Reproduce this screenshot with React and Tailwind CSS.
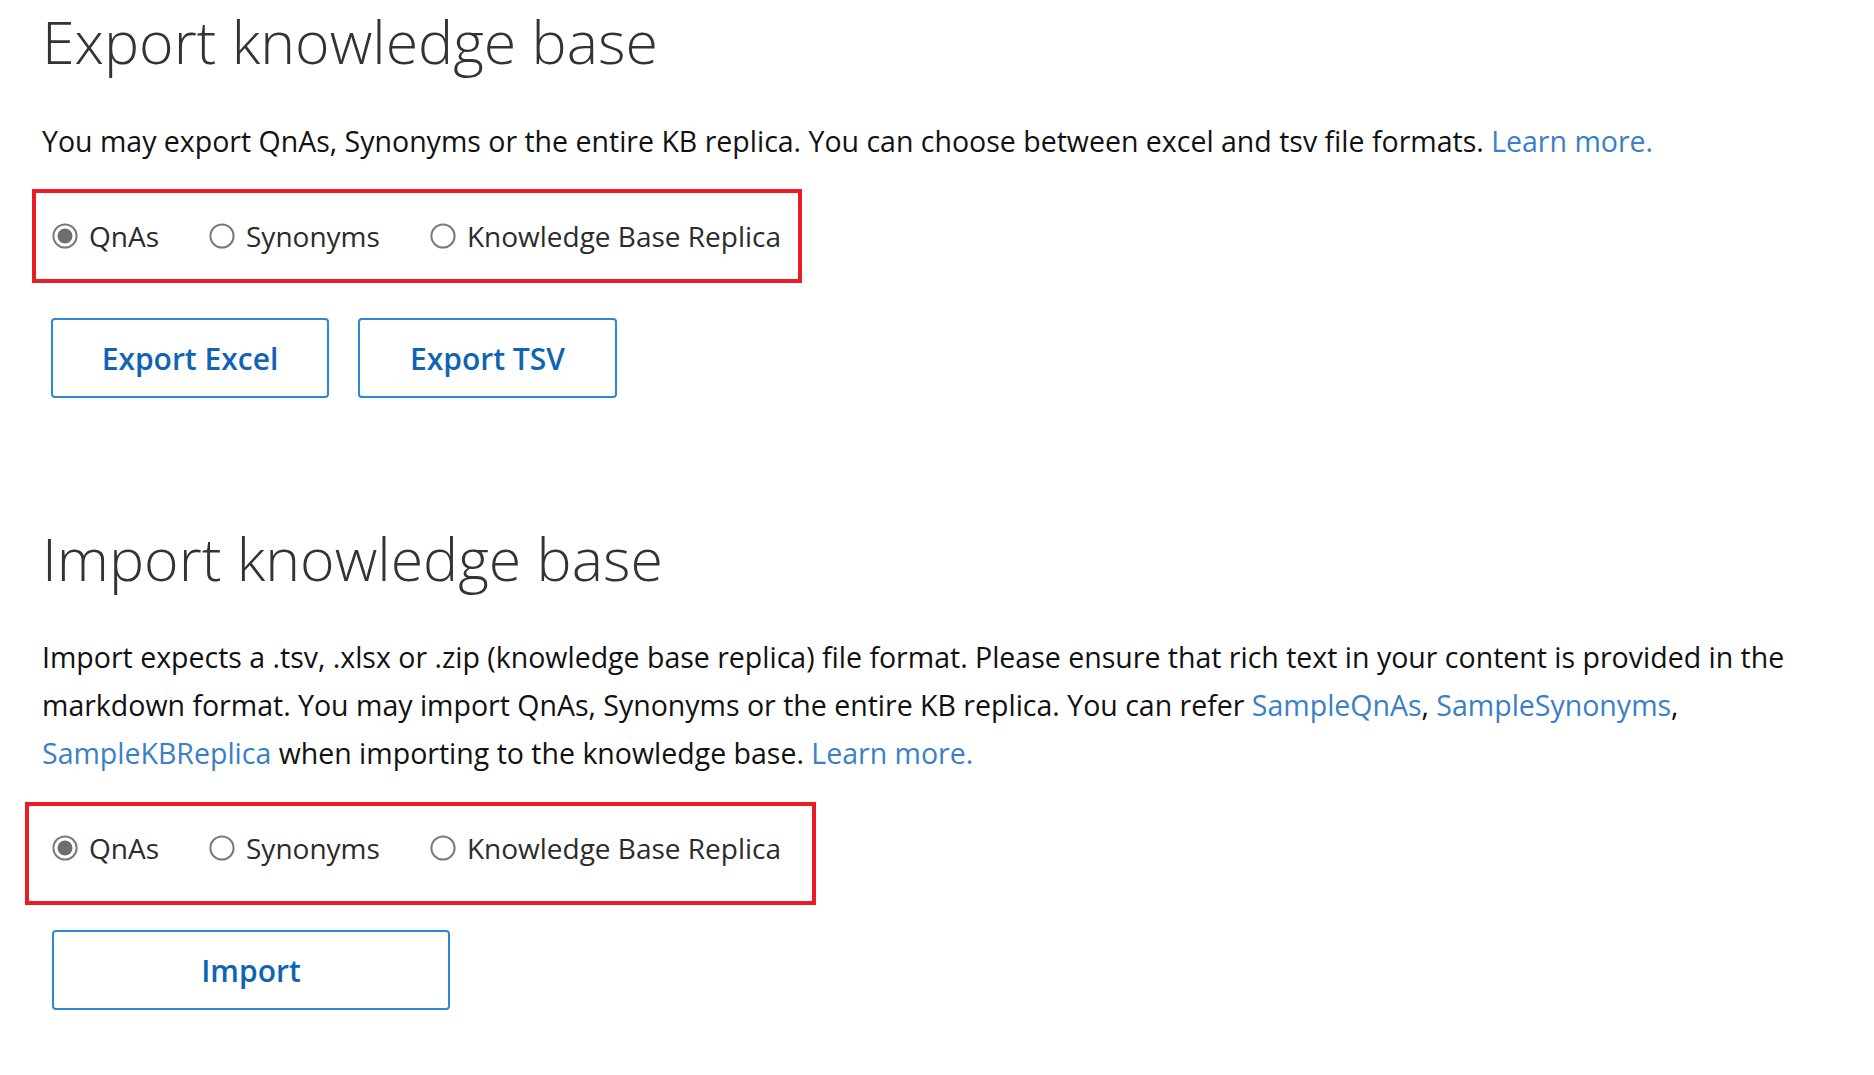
function Radio({ checked, label }) {
  return (
    <label className="flex items-center gap-[11px]">
      <svg width="26" height="26" viewBox="0 0 26 26" className="shrink-0">
        <circle cx="13" cy="13" r="11.6" fill="white" stroke="#7a7a7a" strokeWidth="2" />
        {checked && <circle cx="13" cy="13" r="7.5" fill="#6e6e6e" />}
      </svg>
      <span className="text-[#2b2b2b]">{label}</span>
    </label>
  );
}

function RadioBox({ className }) {
  return (
    <div className={`flex items-center border-[4px] border-[#ec1c24] ${className}`}>
      <div className="flex items-center gap-[50px] text-[28px] leading-none">
        <Radio checked label="QnAs" />
        <Radio label="Synonyms" />
        <Radio label="Knowledge Base Replica" />
      </div>
    </div>
  );
}

function Btn({ children, className }) {
  return (
    <button className={`flex h-[80px] items-center justify-center rounded-[4px] border-2 border-[#2b88d8] bg-white text-[30px] font-semibold text-[#0f64b4] ${className}`}>
      {children}
    </button>
  );
}

const link = "text-[#3a80c6]";

export default function App() {
  return (
    <div className="min-h-screen bg-white pl-[42px] font-[family-name:'Open_Sans','Noto_Sans',sans-serif] text-[#111]">
      <section>
        <h1 className="mt-[1px] text-[59px] font-light leading-[80px] text-[#333]">Export knowledge base</h1>
        <p className="mt-[36px] text-[28.5px] leading-[48px]">
          You may export QnAs, Synonyms or the entire KB replica. You can choose between excel and tsv file formats.{" "}
          <a className={link}>Learn more.</a>
        </p>
        <RadioBox className="-ml-[10px] mt-[24px] h-[94px] w-[770px] pl-[16px]" />
        <div className="mt-[35px] ml-[9px] flex gap-[29px]">
          <Btn className="w-[278px]">Export Excel</Btn>
          <Btn className="w-[259px]">Export TSV</Btn>
        </div>
      </section>
      <section>
        <h1 className="mt-[120px] text-[59px] font-light leading-[80px] text-[#333]">Import knowledge base</h1>
        <p className="mt-[35px] max-w-[1815px] text-[28.5px] leading-[48px]">
          Import expects a .tsv, .xlsx or .zip (knowledge base replica) file format. Please ensure that rich text in your content is provided in the markdown format. You may import QnAs, Synonyms or the entire KB replica. You can refer{" "}
          <a className={link}>SampleQnAs</a>, <a className={link}>SampleSynonyms</a>,{" "}
          <a className={link}>SampleKBReplica</a> when importing to the knowledge base.{" "}
          <a className={link}>Learn more.</a>
        </p>
        <RadioBox className="-ml-[17px] mt-[25px] h-[103px] w-[791px] pb-[11px] pl-[23px]" />
        <div className="mt-[25px] ml-[10px] flex">
          <Btn className="w-[398px]">Import</Btn>
        </div>
      </section>
    </div>
  );
}
